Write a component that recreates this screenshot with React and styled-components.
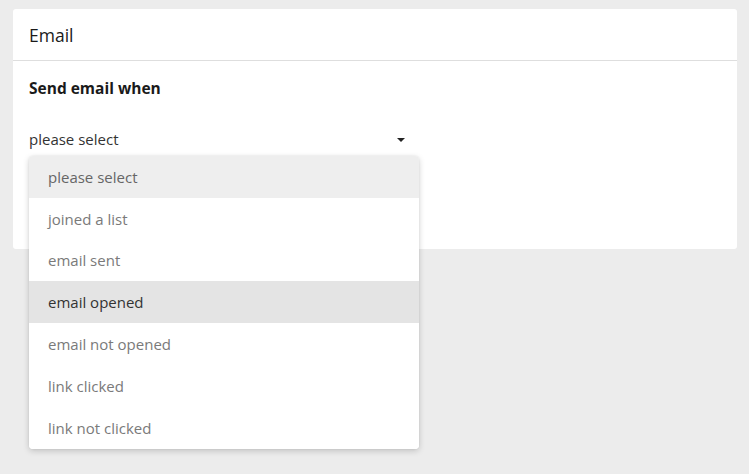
import React from "react";
import styled, { createGlobalStyle } from "styled-components";

const Global = createGlobalStyle`
  html, body { margin: 0; padding: 0; background: #ececec; }
  body { font-family: "Open Sans", "Liberation Sans", sans-serif; }
  * { box-sizing: border-box; }
`;

const Page = styled.div`
  padding: 9px 12px 0 13px;
  min-height: 474px;
  background: #ececec;
`;

const Card = styled.section`
  background: #fff;
  border-radius: 3px;
  height: 240px;
`;

const Header = styled.header`
  height: 52px;
  display: flex;
  align-items: center;
  padding: 0 16px;
  border-bottom: 1px solid #dedede;
  font-size: 17.5px;
  color: #1a1a1a;
`;

const Body = styled.div`
  padding: 17px 16px 0;
`;

const Label = styled.div`
  font-weight: 700;
  font-size: 15.5px;
  line-height: 20px;
  color: #1a1a1a;
`;

const SelectWrap = styled.div`
  position: relative;
  width: 390px;
  margin-top: 25px;
`;

const SelectField = styled.div`
  height: 32px;
  display: flex;
  align-items: center;
  justify-content: space-between;
  padding-right: 14px;
  font-size: 15px;
  color: #333;
`;

const Caret = styled.span`
  width: 0;
  height: 0;
  border-left: 4px solid transparent;
  border-right: 4px solid transparent;
  border-top: 4px solid #222;
  margin-top: 2px;
`;

const Menu = styled.ul`
  position: absolute;
  top: 33px;
  left: 0;
  width: 390px;
  margin: 0;
  padding: 0;
  list-style: none;
  background: #fff;
  border-radius: 4px;
  box-shadow: 0 2px 6px rgba(0, 0, 0, 0.18), 0 0 2px rgba(0, 0, 0, 0.08);
  overflow: hidden;
`;

const Item = styled.li`
  height: 41.8px;
  display: flex;
  align-items: center;
  padding-left: 19px;
  font-size: 15px;
  color: ${(p) => (p.$active ? "#333" : p.$placeholder ? "#666" : "#7a7a7a")};
  background: ${(p) => (p.$active ? "#e4e4e4" : p.$placeholder ? "#eeeeee" : "#fff")};
`;

const options = [
  "please select",
  "joined a list",
  "email sent",
  "email opened",
  "email not opened",
  "link clicked",
  "link not clicked",
];

export default function App() {
  return (
    <>
      <Global />
      <Page>
        <Card>
          <Header>Email</Header>
          <Body>
            <Label>Send email when</Label>
            <SelectWrap>
              <SelectField>
                <span>please select</span>
                <Caret />
              </SelectField>
              <Menu>
                {options.map((o, i) => (
                  <Item key={o} $placeholder={i === 0} $active={o === "email opened"}>
                    {o}
                  </Item>
                ))}
              </Menu>
            </SelectWrap>
          </Body>
        </Card>
      </Page>
    </>
  );
}
